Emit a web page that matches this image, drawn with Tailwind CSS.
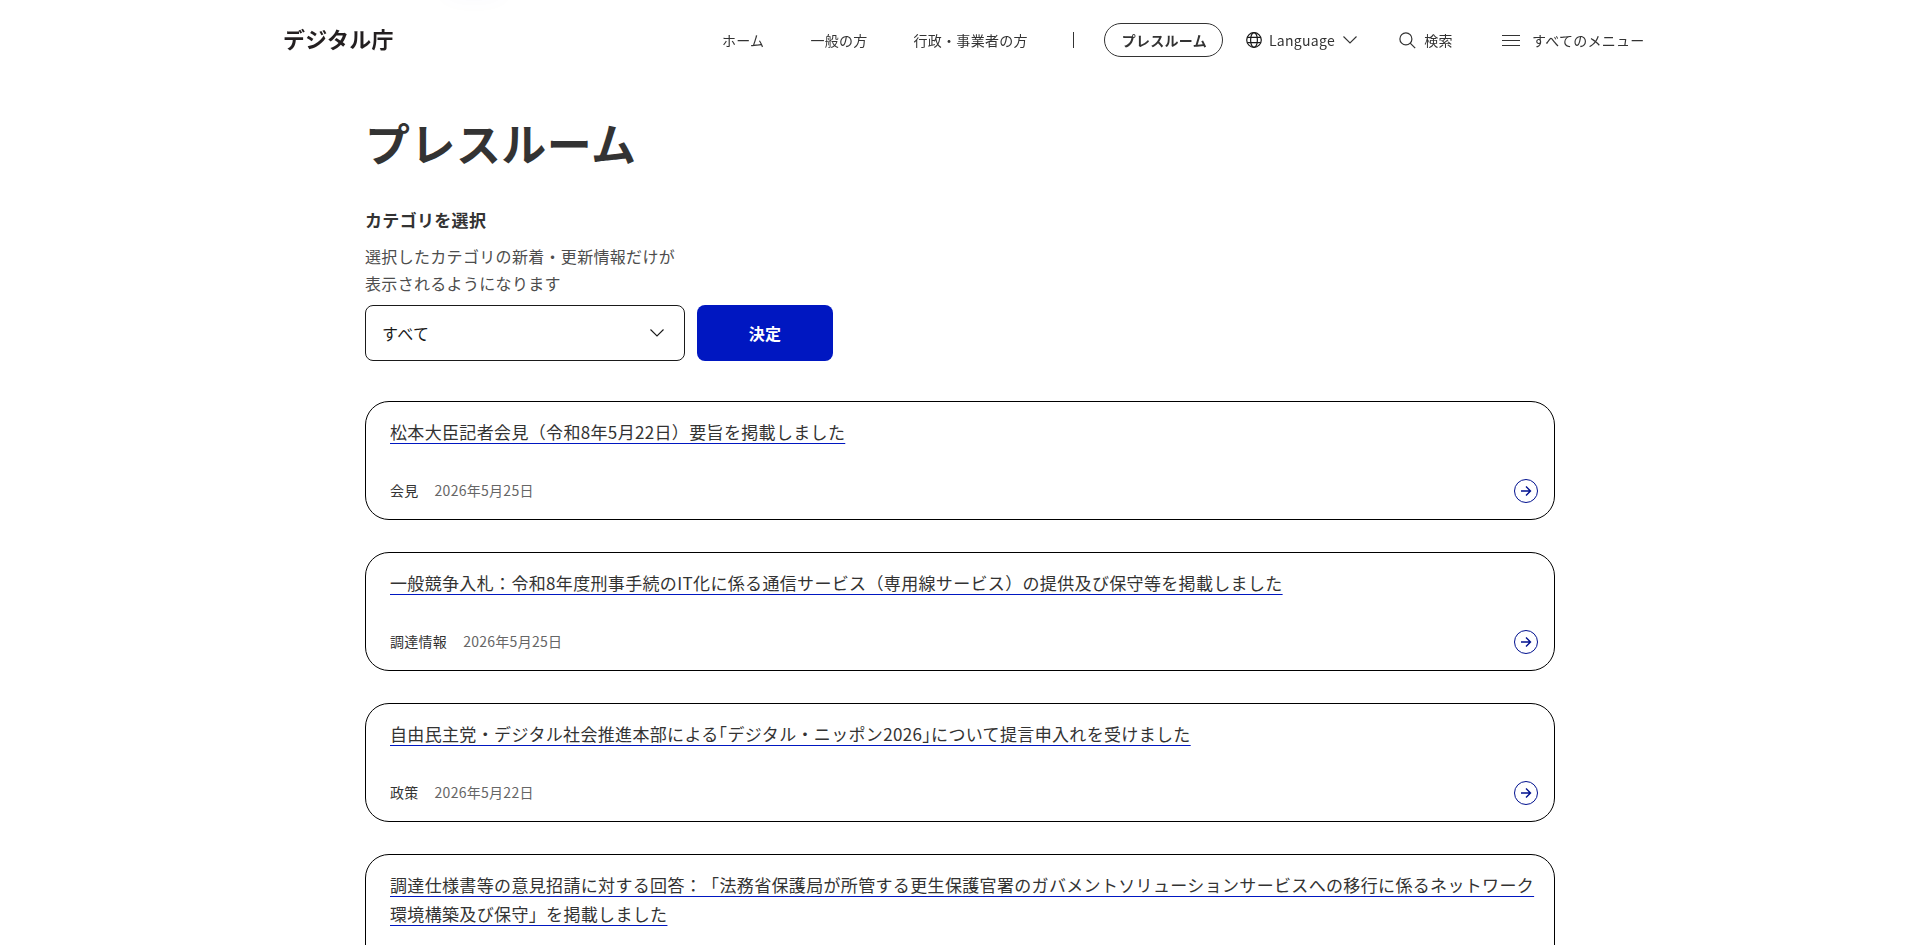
<!DOCTYPE html>
<html lang="ja">
<head>
    <meta charset="UTF-8">
    <meta name="viewport" content="width=device-width, initial-scale=1.0">
    <script src="https://cdn.jsdelivr.net/npm/@tailwindcss/browser@4"></script>
    <title>プレスルーム｜デジタル庁</title>
</head>
<body class="h-screen overflow-hidden bg-white font-['Noto_Sans_CJK_JP',sans-serif] text-[#333333] tracking-[0.02em] [text-spacing-trim:space-all]">
    <a href="#main" class="absolute left-[446px] -top-[47px] w-14 h-10 shadow-[0_4px_24px_rgba(0,23,193,0.03)]"></a>

    <header class="flex items-center h-20 pl-[283px] pr-[275.4px] text-sm tracking-[0.02em] will-change-transform">
        <a href="#" class="pb-0.5 text-[22px] font-bold text-[#231f20] tracking-[0.01em] whitespace-nowrap">デジタル庁</a>
        <nav class="flex items-center ml-auto whitespace-nowrap">
            <a href="#" class="mr-[46px]">ホーム</a>
            <a href="#" class="mr-[46px]">一般の方</a>
            <a href="#">行政・事業者の方</a>
            <span class="w-px h-4 ml-[45.6px] mr-[30px] bg-[#333333]"></span>
            <a href="#" class="flex items-center justify-center w-[119px] h-[34px] pl-px border border-[#333333] rounded-full font-bold">プレスルーム</a>
            <button class="flex items-center ml-[22.6px]">
                <svg class="w-4 h-4 mr-[7px]" viewBox="0 0 16 16" fill="none" stroke="#1a1a1a" stroke-width="1.2">
                    <circle cx="8" cy="8" r="7.3" />
                    <ellipse cx="8" cy="8" rx="3.4" ry="7.3" />
                    <path d="M1.3 5.3h13.4M1.3 10.7h13.4" />
                </svg>
                Language
                <svg class="w-[14px] h-2 ml-2" viewBox="0 0 14 8" fill="none" stroke="#333333" stroke-width="1.1">
                    <path d="M.5.5 7 7 13.5.5" />
                </svg>
            </button>
            <button class="flex items-center ml-[42.4px]">
                <svg class="w-[17px] h-[17px] mr-2" viewBox="0 0 17 17" fill="none" stroke="#333333" stroke-width="1.2">
                    <circle cx="6.9" cy="6.9" r="6" />
                    <path d="m11.2 11.2 5 5" />
                </svg>
                検索
            </button>
            <button class="flex items-center ml-[49px]">
                <svg class="w-[18px] h-[11px] mr-3" viewBox="0 0 18 11" fill="none" stroke="#333333">
                    <path d="M0 .5h18M0 5.5h18M0 10.5h18" />
                </svg>
                すべてのメニュー
            </button>
        </nav>
    </header>

    <main id="main" class="w-[1190px] mx-auto">
        <h1 class="pt-[30px] text-[45px] leading-[66px] font-bold tracking-[0.45px]">プレスルーム</h1>

        <form class="mt-[29px]">
            <label for="category" class="block text-[17px] leading-[29px] font-bold">カテゴリを選択</label>
            <p class="mt-[9px] text-base leading-[27px] text-[#4d4d4d]">選択したカテゴリの新着・更新情報だけが<br>表示されるようになります</p>
            <div class="flex gap-3 mt-2">
                <div id="category" class="flex items-center justify-between w-80 h-14 pl-4 pr-5 border border-[#1a1a1a] rounded-lg text-base text-[#1a1a1a]">
                    すべて
                    <svg class="w-[14px] h-2" viewBox="0 0 14 8" fill="none" stroke="#1a1a1a" stroke-width="1.1">
                        <path d="M.5.5 7 7 13.5.5" />
                    </svg>
                </div>
                <button type="button" class="w-[136px] h-14 rounded-lg bg-[#0017c1] text-base font-bold text-white">決定</button>
            </div>
        </form>

        <ul class="flex flex-col gap-8 mt-10">
            <li class="pl-6 pr-4 pt-[15px] pb-4 border border-black rounded-3xl">
                <a href="#" class="block text-[17px] leading-[29px] tracking-[0.34px] underline decoration-1 decoration-[#0017c1] underline-offset-4 [text-decoration-skip-ink:none]">松本大臣記者会見（令和8年5月22日）要旨を掲載しました</a>
                <div class="flex items-center h-6 mt-[33px] text-sm tracking-[0.02em]">
                    <span class="pb-[3px]">会見</span>
                    <time class="pb-[3px] ml-4 text-[#666666]">2026年5月25日</time>
                    <svg class="w-6 h-6 ml-auto" viewBox="0 0 24 24" fill="none" stroke="#00118f">
                        <circle cx="12" cy="12" r="11.5" />
                        <path stroke-width="1.4" d="M7 12h9.5M12 7.5l4.5 4.5-4.5 4.5" />
                    </svg>
                </div>
            </li>
            <li class="pl-6 pr-4 pt-[15px] pb-4 border border-black rounded-3xl">
                <a href="#" class="block text-[17px] leading-[29px] tracking-[0.34px] underline decoration-1 decoration-[#0017c1] underline-offset-4 [text-decoration-skip-ink:none]">一般競争入札：令和8年度刑事手続のIT化に係る通信サービス（専用線サービス）の提供及び保守等を掲載しました</a>
                <div class="flex items-center h-6 mt-[33px] text-sm tracking-[0.02em]">
                    <span class="pb-[3px]">調達情報</span>
                    <time class="pb-[3px] ml-4 text-[#666666]">2026年5月25日</time>
                    <svg class="w-6 h-6 ml-auto" viewBox="0 0 24 24" fill="none" stroke="#00118f">
                        <circle cx="12" cy="12" r="11.5" />
                        <path stroke-width="1.4" d="M7 12h9.5M12 7.5l4.5 4.5-4.5 4.5" />
                    </svg>
                </div>
            </li>
            <li class="pl-6 pr-4 pt-[15px] pb-4 border border-black rounded-3xl">
                <a href="#" class="block text-[17px] leading-[29px] tracking-[0.34px] underline decoration-1 decoration-[#0017c1] underline-offset-4 [text-decoration-skip-ink:none]">自由民主党・デジタル社会推進本部による｢デジタル・ニッポン2026｣について提言申入れを受けました</a>
                <div class="flex items-center h-6 mt-[33px] text-sm tracking-[0.02em]">
                    <span class="pb-[3px]">政策</span>
                    <time class="pb-[3px] ml-4 text-[#666666]">2026年5月22日</time>
                    <svg class="w-6 h-6 ml-auto" viewBox="0 0 24 24" fill="none" stroke="#00118f">
                        <circle cx="12" cy="12" r="11.5" />
                        <path stroke-width="1.4" d="M7 12h9.5M12 7.5l4.5 4.5-4.5 4.5" />
                    </svg>
                </div>
            </li>
            <li class="pl-6 pr-4 pt-[15px] pb-[73px] border border-black rounded-3xl">
                <a href="#" class="block text-[17px] leading-[29px] tracking-[0.34px] underline decoration-1 decoration-[#0017c1] underline-offset-4 [text-decoration-skip-ink:none]">調達仕様書等の意見招請に対する回答：「法務省保護局が所管する更生保護官署のガバメントソリューションサービスへの移行に係るネットワーク環境構築及び保守」を掲載しました</a>
            </li>
        </ul>
    </main>
</body>
</html>
